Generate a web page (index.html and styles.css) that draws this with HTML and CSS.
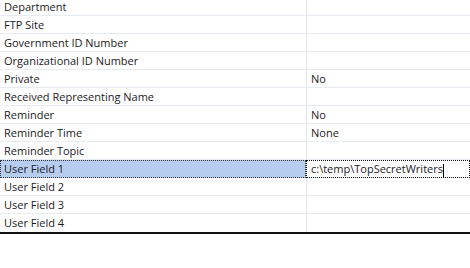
FILE: index.html
```html
<!DOCTYPE html>
<html lang="en">

<head>
    <meta charset="UTF-8">
    <title>Fields</title>
    <link rel="stylesheet" href="styles.css">
</head>

<body>
    <div class="grid">
        <div class="row"><div class="name">Department</div><div class="value"></div></div>
        <div class="row"><div class="name">FTP Site</div><div class="value"></div></div>
        <div class="row"><div class="name">Government ID Number</div><div class="value"></div></div>
        <div class="row"><div class="name">Organizational ID Number</div><div class="value"></div></div>
        <div class="row"><div class="name">Private</div><div class="value">No</div></div>
        <div class="row"><div class="name">Received Representing Name</div><div class="value"></div></div>
        <div class="row"><div class="name">Reminder</div><div class="value">No</div></div>
        <div class="row"><div class="name">Reminder Time</div><div class="value">None</div></div>
        <div class="row"><div class="name">Reminder Topic</div><div class="value"></div></div>
        <div class="row selected">
            <div class="name">User Field 1</div>
            <div class="value editing">c:\temp\TopSecretWriters<span class="caret"></span></div>
        </div>
        <div class="row"><div class="name">User Field 2</div><div class="value"></div></div>
        <div class="row"><div class="name">User Field 3</div><div class="value"></div></div>
        <div class="row"><div class="name">User Field 4</div><div class="value"></div></div>
    </div>
</body>

</html>
```

FILE: styles.css
```css
body {
    margin: 0;
    background: #fff;
    font-family: 'Open Sans', 'Noto Sans', sans-serif;
    font-size: 11px;
    color: #1c1a1e;
    overflow: hidden;
}

.grid {
    margin-top: -2px;
    border-bottom: 2px solid #111;
}

.row {
    display: grid;
    grid-template-columns: 306px 1fr;
    height: 17px;
    border-bottom: 1px solid #e6ebf1;
}

.row:last-child {
    border-bottom: none;
    height: 18px;
}

.name,
.value {
    padding-left: 4px;
    line-height: 17px;
    white-space: nowrap;
}

.value {
    border-left: 1px solid #e3e8ef;
}

.selected .name {
    background-color: #b6cdef;
    outline: 1px dotted #333;
    outline-offset: -1px;
}

.value.editing {
    border: 1px dotted #111;
    padding-left: 4px;
    line-height: 15px;
}

.caret {
    display: inline-block;
    width: 1px;
    height: 13px;
    background: #000;
    vertical-align: middle;
}
```
